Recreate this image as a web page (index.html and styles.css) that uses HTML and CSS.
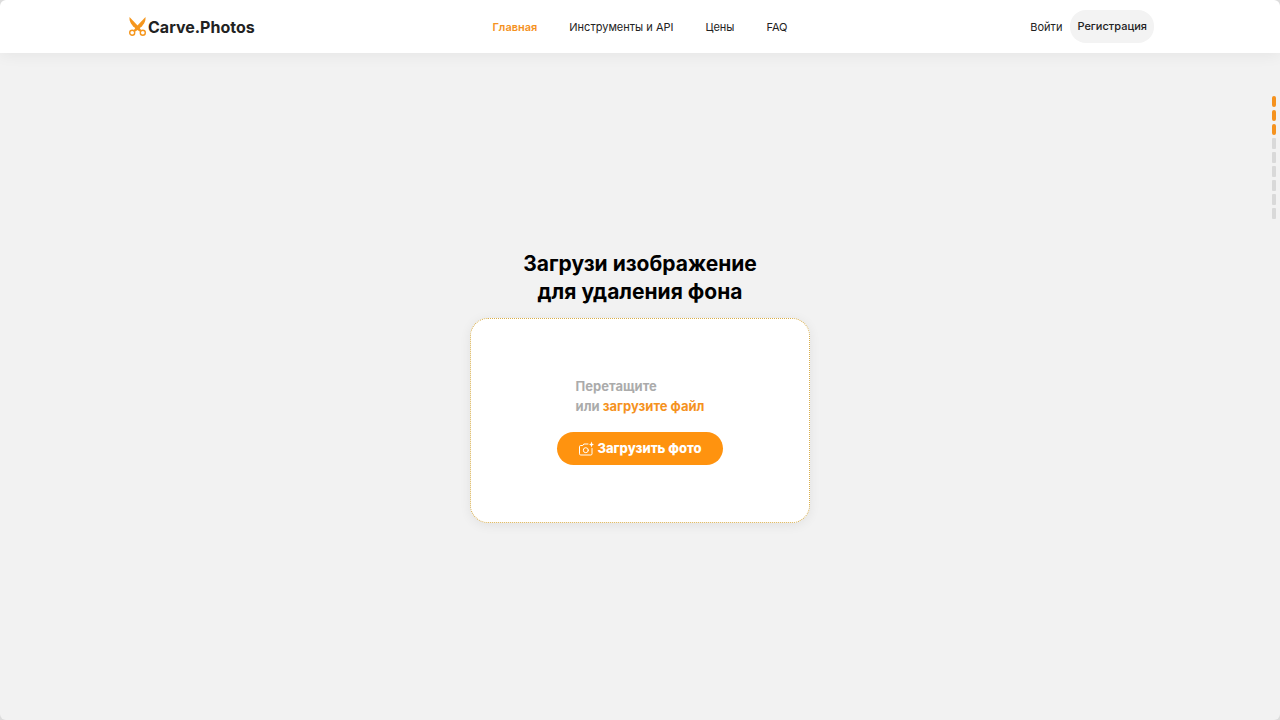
FILE: index.html
```html
<!DOCTYPE html>
<html lang="ru">
<head>
    <meta charset="UTF-8">
    <meta name="viewport" content="width=device-width, initial-scale=1.0">
    <title>Carve.Photos</title>
    <link rel="stylesheet" href="styles.css">
</head>
<body>
    <header class="header">
        <a href="#" class="logo">
            <svg class="logo-icon" viewBox="0 0 18 20" fill="none" stroke="#f5961d">
                <path d="M1.500 0 10.500 9.500 13.500 13.500 11.500 14.500 7.500 11.500C4 8.500 1 5 1.500 0Z" fill="#f5961d" stroke="none"/>
                <path d="M17.500 0 8.500 9.500 5.500 13.500 7.500 14.500 11.500 11.500C15 8.500 18 5 17.500 0Z" fill="#f5961d" stroke="none"/>
                <circle cx="4.200" cy="15.700" r="2.500" stroke-width="1.400"/>
                <circle cx="14.800" cy="15.700" r="2.500" stroke-width="1.400"/>
            </svg>
            <span>Carve.Photos</span>
        </a>
        <nav class="nav">
            <a href="#" class="nav-link active">Главная</a>
            <a href="#" class="nav-link">Инструменты и API</a>
            <a href="#" class="nav-link">Цены</a>
            <a href="#" class="nav-link">FAQ</a>
        </nav>
        <div class="auth">
            <a href="#" class="login">Войти</a>
            <a href="#" class="register">Регистрация</a>
        </div>
    </header>

    <main class="main">
        <h1>Загрузи изображение<br>для удаления фона</h1>
        <section class="dropzone">
            <p class="hint">Перетащите<br>или <a href="#">загрузите файл</a></p>
            <button type="button" class="upload-btn">
                <svg class="camera" viewBox="0 0 16 16" fill="none" stroke="#fff" stroke-linecap="round" stroke-linejoin="round">
                    <path d="M10 3H5.800L4.800 4.500H2.700Q1.500 4.500 1.500 5.700V12.800Q1.500 14 2.700 14H12.800Q14 14 14 12.800V7.500"/>
                    <circle cx="7.800" cy="9.200" r="2.500"/>
                    <path d="M13.500 .5 14.300 2.700 16 3.500 14.300 4.300 13.500 6.500 12.700 4.300 11 3.500 12.700 2.700Z" fill="#fff" stroke="none"/>
                </svg>
                <span>Загрузить фото</span>
            </button>
        </section>
    </main>

    <!-- полоска лимита справа -->
    <div class="steps">
        <span class="step done"></span>
        <span class="step done"></span>
        <span class="step done"></span>
        <span class="step"></span>
        <span class="step"></span>
        <span class="step"></span>
        <span class="step"></span>
        <span class="step"></span>
        <span class="step"></span>
    </div>
</body>
</html>
```
FILE: styles.css
```css
* {
    margin: 0;
    padding: 0;
    box-sizing: border-box;
}
html {
    background-color: #dcdcdc;
}
body {
    display: flex;
    flex-direction: column;
    min-height: 100vh;
    font-family: Inter, "Liberation Sans", sans-serif;
    font-size: 11px;
    color: #222;
    background-color: #f2f2f2;
    border-radius: 6px;
}
a {
    color: inherit;
    text-decoration: none;
}
.header {
    display: grid;
    grid-template-columns: 1fr auto 1fr;
    align-items: center;
    padding: 10px 126px;
    background-color: #fff;
    border-radius: 6px 6px 0 0;
    box-shadow: 0 2px 16px rgba(0, 0, 0, 0.06);
}
.logo {
    display: flex;
    align-items: center;
    font-size: 16px;
    line-height: 20px;
    font-weight: 700;
}
.logo-icon {
    width: 22px;
    height: 20px;
}
.nav {
    display: flex;
    gap: 32px;
}
.active {
    color: #f5921e;
    font-weight: 600;
}
.auth {
    display: flex;
    align-items: center;
    justify-content: flex-end;
    gap: 8px;
}
.register {
    padding: 0 7px;
    line-height: 33px;
    font-weight: 500;
    background-color: #f3f3f3;
    border-radius: 16px;
}
.main {
    flex: 1;
    display: flex;
    flex-direction: column;
    align-items: center;
    justify-content: center;
    gap: 12px;
}
h1 {
    font-size: 21px;
    line-height: 28px;
    font-weight: 700;
    color: #000;
    text-align: center;
}
.dropzone {
    display: flex;
    flex-direction: column;
    align-items: center;
    gap: 16px;
    width: 100%;
    max-width: 340px;
    padding: 57px 20px;
    background-color: #fff;
    border: 1px dotted #d9ae4a;
    border-radius: 18px;
    box-shadow: 0 2px 12px rgba(0, 0, 0, 0.07);
}
.hint {
    font-size: 13px;
    line-height: 20px;
    font-weight: 700;
    color: #ababab;
}
.hint a {
    color: #f5921e;
}
.upload-btn {
    display: flex;
    align-items: center;
    gap: 3px;
    padding: 0 21px;
    font-family: inherit;
    font-size: 13px;
    line-height: 33px;
    font-weight: 800;
    color: #fff;
    background-color: #ff930f;
    border: none;
    border-radius: 17px;
    cursor: pointer;
}
.camera {
    width: 16px;
    height: 16px;
}
.steps {
    position: fixed;
    top: 96px;
    right: 4px;
    display: flex;
    flex-direction: column;
    gap: 3px;
}
.step {
    width: 4px;
    height: 11px;
    background-color: #d9d9d9;
    border-radius: 1px;
}
.done {
    background-color: #f5921e;
    border-radius: 2px;
}
```
